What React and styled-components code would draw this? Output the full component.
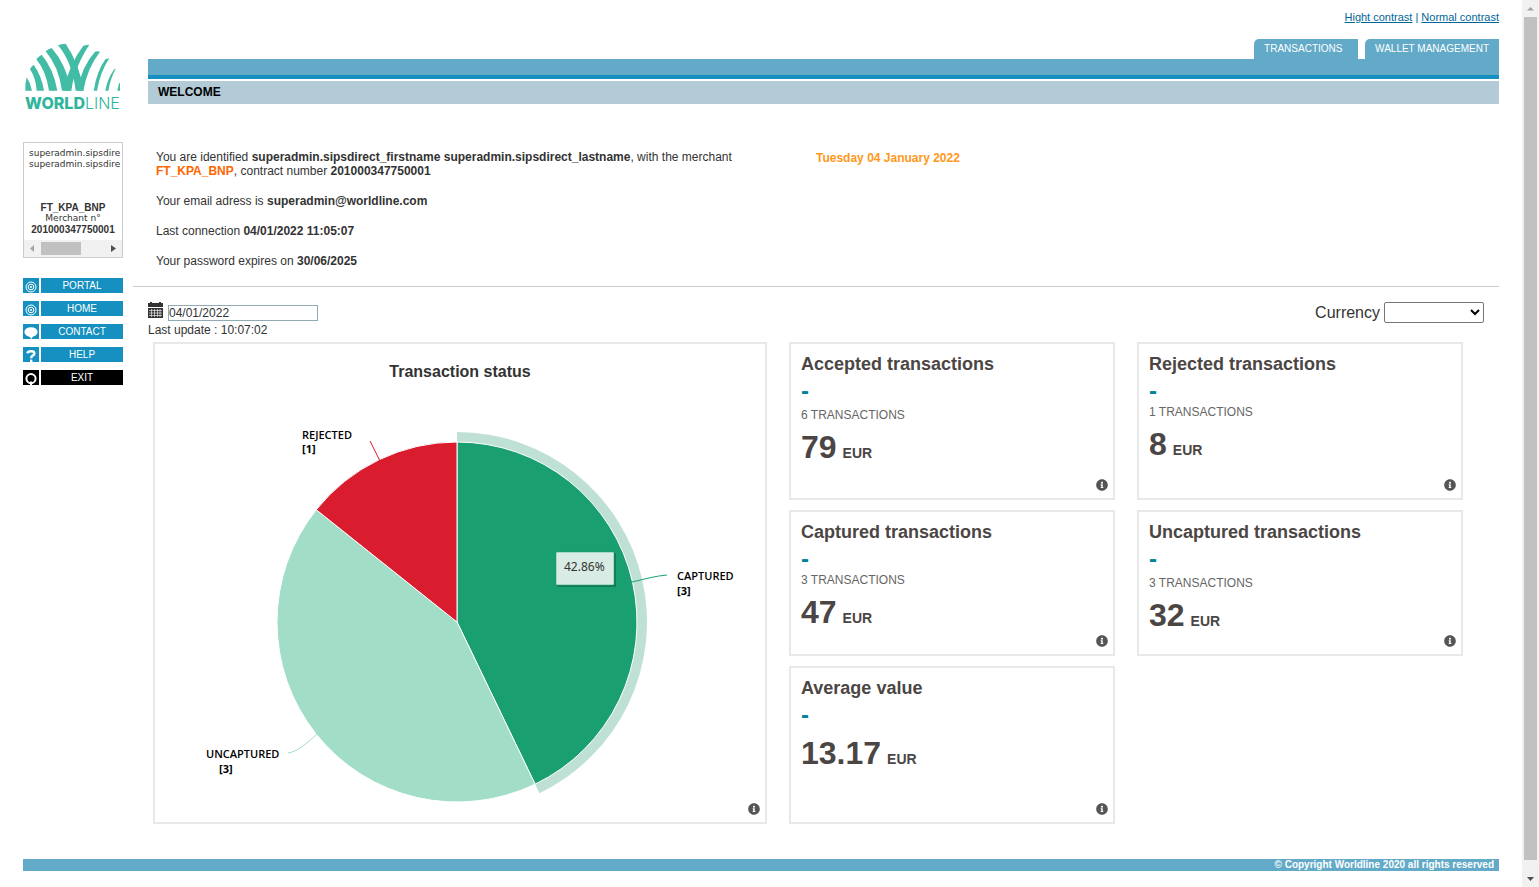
import React from 'react';
import styled, { createGlobalStyle } from 'styled-components';
import { FaInfoCircle } from 'react-icons/fa';

const Global = createGlobalStyle`
  * { box-sizing: border-box; }
  body {
    margin: 0;
    background: #fff;
    color: #333;
    font: 12px/14px "Liberation Sans", Arial, sans-serif;
  }
`;

const Shell = styled.div`
  display: flex;
  min-height: 100vh;
`;

const Page = styled.div`
  flex: 1;
  min-width: 0;
  padding: 0 23px 16px;
`;

const Columns = styled.div`
  display: flex;
  gap: 10px;
`;

/* ---------- Sidebar ---------- */

const Sidebar = styled.aside`
  flex: 0 0 100px;
  width: 100px;
  padding-top: 43px;
`;

const Logo = styled.a`
  display: block;
  width: 96px;
  margin-left: 2px;
  height: 79px;
  margin-bottom: 20px;
  text-decoration: none;
  svg { display: block; width: 96px; height: 49px; }
`;

const LogoName = styled.span`
  display: block;
  padding-top: 2px;
  color: #2fb59c;
  font: 300 16px/18px Inter, sans-serif;
  white-space: nowrap;
  b { font-weight: 800; }
`;

const MerchantBox = styled.div`
  border: 1px solid #ccc;
  height: 116px;
  display: flex;
  flex-direction: column;
  justify-content: space-between;
  margin-bottom: 20px;
`;

const MerchantText = styled.div`
  padding: 5px 0 0 5px;
  font-family: "DejaVu Sans", Verdana, sans-serif;
  font-size: 9px;
  line-height: 11px;
  white-space: nowrap;
`;

const MerchantNumber = styled.div`
  margin: 32px 5px 0 0;
  text-align: center;
  b {
    display: block;
    font-family: "Liberation Sans", Arial, sans-serif;
    font-size: 10px;
  }
`;

const HScroll = styled.div`
  display: flex;
  align-items: center;
  height: 17px;
  background: #f1f1f1;
  svg { width: 17px; height: 17px; display: block; }
`;

const HThumb = styled.div`
  width: 40px;
  height: 13px;
  margin-right: auto;
  background: #c1c1c1;
`;

const Menu = styled.nav`
  display: flex;
  flex-direction: column;
  gap: 8px;
`;

const MenuLink = styled.a`
  display: flex;
  gap: 2px;
  height: 15px;
  color: #fff;
  font-size: 10px;
  line-height: 15px;
  text-align: center;
  text-decoration: none;
  svg { display: block; width: 16px; height: 15px; background: ${(p) => p.$bg}; }
  span { flex: 1; background: ${(p) => p.$bg}; }
`;

/* ---------- Header ---------- */

const Content = styled.main`
  flex: 1;
  min-width: 0;
`;

const Header = styled.header`
  padding: 10px 0 0 15px;
`;

const ContrastLinks = styled.div`
  text-align: right;
  font-size: 11px;
  color: #069;
  margin-bottom: 15px;
  a { color: #069; }
`;

const Tabs = styled.nav`
  display: flex;
  justify-content: flex-end;
  gap: 7px;
`;

const Tab = styled.a`
  height: 20px;
  min-width: 104px;
  padding: 0 10px;
  border-top-left-radius: 5px;
  background: #62aac7;
  color: #fff;
  font-size: 10px;
  line-height: 20px;
  text-decoration: none;
`;

const Band = styled.div`
  height: 20px;
  background: #62aac7;
  border-bottom: 4px solid #1590c0;
  margin-bottom: 2px;
`;

const Welcome = styled.h1`
  margin: 0;
  padding-left: 10px;
  background: #b2cbd7;
  color: #000;
  font-size: 12px;
  line-height: 23px;
`;

/* ---------- Identity ---------- */

const Identity = styled.section`
  display: grid;
  grid-template-columns: minmax(0, 660px) 1fr;
  padding: 46px 0 18px 23px;
  border-bottom: 1px solid #ccc;
`;

const Facts = styled.div`
  display: flex;
  flex-direction: column;
  gap: 16px;
  padding-right: 20px;
  p { margin: 0; }
`;

const Merchant = styled.b`
  color: #f60;
`;

const Today = styled.b`
  padding-top: 1px;
  color: #ff981a;
`;

/* ---------- Dashboard ---------- */

const Toolbar = styled.div`
  display: flex;
  justify-content: space-between;
  align-items: flex-start;
  padding: 15px 15px 5px 15px;
`;

const DateRow = styled.label`
  display: flex;
  align-items: flex-start;
  gap: 5px;
  margin-bottom: 2px;
  svg { display: block; width: 15px; height: 16px; }
`;

const DateInput = styled.input`
  width: 150px;
  height: 16px;
  margin-top: 3px;
  padding: 0;
  border: 1px solid #8fa9b5;
  color: #333;
  font: 12px/14px "Liberation Sans", Arial, sans-serif;
`;

const CurrencyLabel = styled.label`
  display: flex;
  align-items: center;
  gap: 4px;
  font-size: 16px;
  line-height: 21px;
`;

const CurrencySelect = styled.select`
  width: 100px;
  height: 21px;
  border: 1px solid #767676;
  border-radius: 2px;
  background: #fff;
  font: 13px "Liberation Sans", Arial, sans-serif;
`;

const Board = styled.section`
  display: grid;
  grid-template-columns: 614fr 326fr 326fr;
  grid-template-rows: 158px 146px 158px;
  gap: 10px 22px;
  padding: 0 36px 35px 20px;
`;

const Panel = styled.article`
  position: relative;
  min-width: 0;
  border: 2px solid #e7e8e8;
  background: #fff;
`;

const ChartPanel = styled(Panel)`
  grid-row: 1 / 4;
  svg.chart { display: block; width: 100%; height: auto; }
`;

const ChartTitle = styled.h2`
  margin: 0;
  padding-top: 18px;
  font-size: 16px;
  line-height: 19px;
  text-align: center;
`;

const Card = styled(Panel)`
  grid-column: ${(p) => p.$col};
  padding: 9px 10px;
  color: #4b4644;
`;

const CardTitle = styled.h2`
  margin: 0;
  font-size: 18px;
  line-height: 22px;
`;

const Dash = styled.div`
  padding-top: 3px;
  color: #008299;
  font-size: 24px;
  font-weight: bold;
  line-height: 26px;
`;

const Count = styled.div`
  margin-top: ${(p) => (p.$tight ? 1 : 4)}px;
  color: #666;
`;

const Amount = styled.div`
  margin-top: 7px;
  font-size: 32px;
  font-weight: bold;
  line-height: 36px;
  small { font-size: 14px; margin-left: 6px; }
`;

const InfoButton = styled.button`
  position: absolute;
  right: 5px;
  bottom: 7px;
  width: 12px;
  height: 12px;
  padding: 0;
  border: 0;
  background: none;
  color: #555;
  svg { display: block; width: 12px; height: 12px; }
`;

const Footer = styled.footer`
  padding-right: 5px;
  background: #62aac7;
  color: #fff;
  font-size: 10px;
  font-weight: bold;
  line-height: 12px;
  text-align: right;
`;

const VScroll = styled.div`
  flex: 0 0 17px;
  display: flex;
  flex-direction: column;
  align-items: center;
  background: #f1f1f1;
  svg { display: block; width: 17px; height: 17px; }
`;

const VThumb = styled.div`
  width: 13px;
  flex: 1;
  margin-bottom: 10px;
  background: #c1c1c1;
`;

/* ---------- Drawings ---------- */

const LogoMark = () => (
  <svg viewBox="75 38 288 147" aria-hidden="true" fill="#43bca6">
    <path d="M80 141Q91 157 96 181H76Q75 160 80 141Z" />
    <path d="M101 103Q125 137 132 181H110Q107 142 90 117Q94 108 101 103Z" />
    <path d="M125 73Q161 116 172 181H147Q139 124 109 87Q116 78 125 73Z" />
    <path d="M155 53Q198 101 214 181H186Q176 109 137 63Q145 56 155 53Z" />
    <path d="M197 40Q239 102 251 181H227Q216 94 174 45Q184 40 197 40Z" />
    <path d="M250 46Q258 43 268 43Q238 88 224 135Q217 157 214 181H190Q208 100 250 46Z" />
    <path d="M285 64Q292 62 300 64Q262 113 250 181H232Q246 106 285 64Z" />
    <path d="M316 87L328 84Q301 124 291 181H281Q290 124 316 87Z" />
    <path d="M341 119L348 114Q332 142 325 181H316Q322 147 341 119Z" />
    <path d="M357 159L360 158V181H352Z" />
  </svg>
);

const TargetIcon = () => (
  <svg viewBox="0 0 16 15" fill="none" stroke="#fff" aria-hidden="true">
    <circle cx="8" cy="9" r="5" />
    <circle cx="8" cy="9" r="2.8" />
    <circle cx="8" cy="9" r="1" fill="#fff" stroke="none" />
  </svg>
);

const BubbleIcon = () => (
  <svg viewBox="0 0 16 15" fill="#fff" aria-hidden="true">
    <ellipse cx="8" cy="8" rx="6.6" ry="4.8" />
    <path d="M5.5 11.5L8.5 15L10.5 11.5Z" />
  </svg>
);

const QuestionIcon = () => (
  <svg viewBox="0 0 16 15" fill="none" stroke="#fff" strokeWidth="2.4" aria-hidden="true">
    <path d="M4.4 6.4Q4.8 4.2 8 4.2Q11.4 4.2 11.4 6.4Q11.4 7.8 9.6 8.6Q8.2 9.3 8.2 11.2" />
    <path d="M8.2 12.6V15" />
  </svg>
);

const ExitIcon = () => (
  <svg viewBox="0 0 16 15" fill="none" stroke="#fff" strokeWidth="2" aria-hidden="true">
    <circle cx="8" cy="8.6" r="4.6" />
    <path d="M8 11.5V15" />
  </svg>
);

const CalendarIcon = () => (
  <svg viewBox="0 0 15 16" fill="#333" role="img" aria-label="Date">
    <path d="M2 0H4V1H11V0H13V1H15V5H0V1H2Z" />
    <path d="M0 6H15V16H0Z" />
    <path d="M1 8.5H14M1 11H14M1 13.5H14M3.5 7V15M6.5 7V15M9.5 7V15M12 7V15" stroke="#fff" strokeWidth=".6" />
  </svg>
);

const Arrow = ({ d, fill }) => (
  <svg viewBox="0 0 17 17" aria-hidden="true"><path d={d} fill={fill} /></svg>
);

const ChartLabel = styled.text`
  font: ${(p) => (p.$bold ? 700 : 600)} 11px "Open Sans", sans-serif;
  fill: #000;
`;

const TooltipText = styled.text`
  font: 12px "Noto Sans", sans-serif;
  fill: #333;
`;

const CX = 302;
const CY = 241;
const point = (turn, r) => {
  const a = turn * 2 * Math.PI;
  return `${CX + r * Math.sin(a)} ${CY - r * Math.cos(a)}`;
};
const slice = (from, to, r) => `M${CX} ${CY}L${point(from, r)}A${r} ${r} 0 0 1 ${point(to, r)}Z`;

const PieChart = () => (
  <svg className="chart" viewBox="0 0 610 441" role="img" aria-label="Transaction status by share">
    <path d={slice(0, 3 / 7, 190)} fill="#bfe1d5" />
    <g stroke="#fff" strokeWidth="1">
      <path d={slice(0, 3 / 7, 180)} fill="#1a9f70" />
      <path d={slice(3 / 7, 6 / 7, 180)} fill="#a1ddc7" />
      <path d={slice(6 / 7, 1, 180)} fill="#d91c2e" />
    </g>
    <g fill="none">
      <path d="M215 60L225 80" stroke="#d91c2e" />
      <path d="M512 194C500 195 490 198 477 201" stroke="#1a9f70" />
      <path d="M133 372C142 371 152 362 162 353" stroke="#a1ddc7" />
    </g>
    <ChartLabel x="147" y="58">REJECTED</ChartLabel>
    <ChartLabel x="147" y="72" $bold>[1]</ChartLabel>
    <ChartLabel x="522" y="199">CAPTURED</ChartLabel>
    <ChartLabel x="522" y="214" $bold>[3]</ChartLabel>
    <ChartLabel x="51" y="377">UNCAPTURED</ChartLabel>
    <ChartLabel x="64" y="392" $bold>[3]</ChartLabel>
    <rect x="402" y="172" width="59" height="34" rx="1" fill="#000" opacity=".22" />
    <rect x="401" y="171" width="58" height="33" rx="1" fill="#d8ebe4" stroke="#1a9f70" strokeWidth=".5" />
    <TooltipText x="409" y="190">42.86%</TooltipText>
  </svg>
);

const Info = ({ about }) => (
  <InfoButton type="button" aria-label={`About ${about}`}><FaInfoCircle /></InfoButton>
);

const menu = [
  { label: 'PORTAL', Icon: TargetIcon, bg: '#1590c0' },
  { label: 'HOME', Icon: TargetIcon, bg: '#1590c0' },
  { label: 'CONTACT', Icon: BubbleIcon, bg: '#1590c0' },
  { label: 'HELP', Icon: QuestionIcon, bg: '#1590c0' },
  { label: 'EXIT', Icon: ExitIcon, bg: '#000' },
];

const cards = [
  { title: 'Accepted transactions', col: 2, count: 6, amount: '79' },
  { title: 'Rejected transactions', col: 3, count: 1, amount: '8', tight: true },
  { title: 'Captured transactions', col: 2, count: 3, amount: '47', tight: true },
  { title: 'Uncaptured transactions', col: 3, count: 3, amount: '32' },
  { title: 'Average value', col: 2, amount: '13.17' },
];

export default function App() {
  return (
    <Shell>
      <Global />
      <Page>
        <Columns>
          <Sidebar>
            <Logo href="#home">
              <LogoMark />
              <LogoName><b>WORLD</b>LINE</LogoName>
            </Logo>
            <MerchantBox>
              <MerchantText>
                <div>superadmin.sipsdire</div>
                <div>superadmin.sipsdire</div>
                <MerchantNumber>
                  <b>FT_KPA_BNP</b>
                  Merchant n°
                  <b>201000347750001</b>
                </MerchantNumber>
              </MerchantText>
              <HScroll>
                <Arrow d="M10 5V12L6 8.5Z" fill="#a3a3a3" />
                <HThumb />
                <Arrow d="M6 5V12L11 8.5Z" fill="#505050" />
              </HScroll>
            </MerchantBox>
            <Menu>
              {menu.map(({ label, Icon, bg }) => (
                <MenuLink key={label} href={`#${label.toLowerCase()}`} $bg={bg}>
                  <Icon /><span>{label}</span>
                </MenuLink>
              ))}
            </Menu>
          </Sidebar>

          <Content>
            <Header>
              <ContrastLinks>
                <a href="#high">Hight contrast</a> | <a href="#normal">Normal contrast</a>
              </ContrastLinks>
              <Tabs>
                <Tab href="#transactions">TRANSACTIONS</Tab>
                <Tab href="#wallet">WALLET MANAGEMENT</Tab>
              </Tabs>
              <Band />
              <Welcome>WELCOME</Welcome>
            </Header>

            <Identity>
              <Facts>
                <p>
                  You are identified <b>superadmin.sipsdirect_firstname superadmin.sipsdirect_lastname</b>, with the
                  merchant <Merchant>FT_KPA_BNP</Merchant>, contract number <b>201000347750001</b>
                </p>
                <p>Your email adress is <b>superadmin@worldline.com</b></p>
                <p>Last connection <b>04/01/2022 11:05:07</b></p>
                <p>Your password expires on <b>30/06/2025</b></p>
              </Facts>
              <Today>Tuesday 04 January 2022</Today>
            </Identity>

            <Toolbar>
              <div>
                <DateRow>
                  <CalendarIcon />
                  <DateInput type="text" defaultValue="04/01/2022" />
                </DateRow>
                <div>Last update : 10:07:02</div>
              </div>
              <CurrencyLabel>
                Currency
                <CurrencySelect defaultValue=""><option value="" /></CurrencySelect>
              </CurrencyLabel>
            </Toolbar>

            <Board>
              <ChartPanel>
                <ChartTitle>Transaction status</ChartTitle>
                <PieChart />
                <Info about="Transaction status" />
              </ChartPanel>
              {cards.map((c) => (
                <Card key={c.title} $col={c.col}>
                  <CardTitle>{c.title}</CardTitle>
                  <Dash>-</Dash>
                  {c.count && <Count $tight={c.tight}>{c.count} TRANSACTIONS</Count>}
                  <Amount>{c.amount}<small>EUR</small></Amount>
                  <Info about={c.title} />
                </Card>
              ))}
            </Board>
          </Content>
        </Columns>
        <Footer>© Copyright Worldline 2020 all rights reserved</Footer>
      </Page>
      <VScroll>
        <Arrow d="M5 10.5H12L8.5 7Z" fill="#a3a3a3" />
        <VThumb />
        <Arrow d="M5 7H12L8.5 11Z" fill="#505050" />
      </VScroll>
    </Shell>
  );
}
